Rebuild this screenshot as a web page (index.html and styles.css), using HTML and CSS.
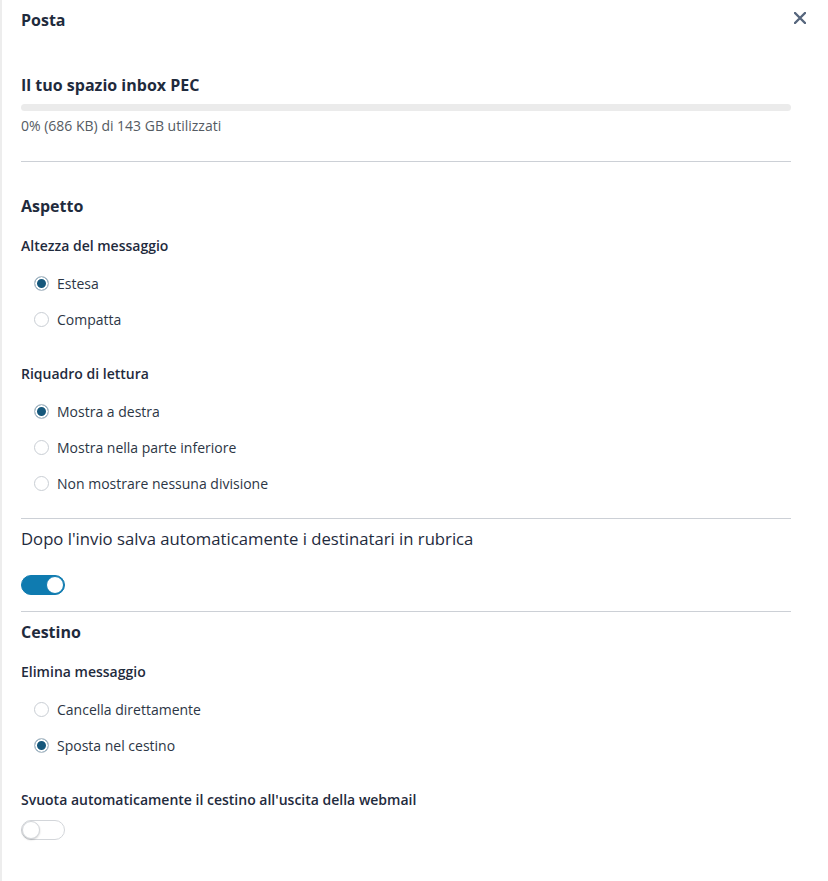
FILE: index.html
```html
<!DOCTYPE html>
<html lang="it">
<head>
  <meta charset="UTF-8">
  <meta name="viewport" content="width=device-width, initial-scale=1.0">
  <title>Posta - Impostazioni</title>
  <link rel="stylesheet" href="styles.css">
</head>
<body>
  <div class="panel">
    <div class="panel-header">
      <h1>Posta</h1>
      <button class="close-btn" aria-label="Chiudi">
        <svg width="12" height="12" viewBox="0 0 12 12"><path d="M1 1L11 11M11 1L1 11" stroke="#56667d" stroke-width="2.4" stroke-linecap="round"/></svg>
      </button>
    </div>

    <div class="panel-body">
      <!-- Spazio -->
      <h2 class="section-title first">Il tuo spazio inbox PEC</h2>
      <div class="usage-bar"><div class="usage-fill" style="width: 0%"></div></div>
      <p class="usage-text">0% (686 KB) di 143 GB utilizzati</p>

      <hr class="divider space-top">

      <!-- Aspetto -->
      <h2 class="section-title">Aspetto</h2>
      <div class="field-label">Altezza del messaggio</div>
      <div class="radio-group">
        <label class="radio-row"><span class="radio checked"></span>Estesa</label>
        <label class="radio-row"><span class="radio"></span>Compatta</label>
      </div>

      <div class="field-label spaced">Riquadro di lettura</div>
      <div class="radio-group">
        <label class="radio-row"><span class="radio checked"></span>Mostra a destra</label>
        <label class="radio-row"><span class="radio"></span>Mostra nella parte inferiore</label>
        <label class="radio-row"><span class="radio"></span>Non mostrare nessuna divisione</label>
      </div>

      <hr class="divider">

      <div class="option-title">Dopo l'invio salva automaticamente i destinatari in rubrica</div>
      <div class="toggle on"><span class="knob"></span></div>

      <hr class="divider tight">

      <!-- Cestino -->
      <h2 class="section-title compact">Cestino</h2>
      <div class="field-label">Elimina messaggio</div>
      <div class="radio-group">
        <label class="radio-row"><span class="radio"></span>Cancella direttamente</label>
        <label class="radio-row"><span class="radio checked"></span>Sposta nel cestino</label>
      </div>

      <div class="field-label spaced">Svuota automaticamente il cestino all'uscita della webmail</div>
      <div class="toggle small-gap"><span class="knob"></span></div>
    </div>
  </div>
</body>
</html>
```

FILE: styles.css
```css
body {
  margin: 0;
  font-family: "Open Sans", Arial, sans-serif;
  color: #1f2b3d;
  background-color: #fff;
}

.panel {
  min-height: 881px;
  border-left: 2px solid #ededed;
  box-sizing: border-box;
}

.panel-header {
  display: flex;
  align-items: center;
  justify-content: space-between;
  height: 40px;
  padding: 0 16px 0 19px;
}

h1 {
  margin: 0;
  font-size: 16px;
  font-weight: 700;
  line-height: 24px;
}

.close-btn {
  display: flex;
  align-items: center;
  justify-content: center;
  width: 24px;
  height: 24px;
  padding: 0;
  margin-top: -4px;
  border: none;
  background: none;
  cursor: pointer;
}

.panel-body {
  padding: 0 37px 0 19px;
}

.section-title {
  margin: 32px 0 0;
  font-size: 16px;
  font-weight: 700;
  line-height: 24px;
}

.section-title.first {
  margin-top: 33px;
}

.section-title.compact {
  margin-top: 8px;
}

/* Usage bar */
.usage-bar {
  height: 7px;
  margin-top: 7px;
  border-radius: 4px;
  background-color: #ebebeb;
  overflow: hidden;
}

.usage-fill {
  height: 100%;
  background-color: #0f7bb0;
}

.usage-text {
  margin: 6px 0 0;
  font-size: 14px;
  line-height: 18px;
  color: #555b63;
}

.divider {
  margin: 17px 0 0;
  border: none;
  border-top: 1px solid #ccd0d6;
}

.divider.space-top {
  margin-top: 26px;
}

.divider.tight {
  margin-top: 16px;
}

.field-label {
  margin-top: 18px;
  font-size: 14px;
  font-weight: 600;
  line-height: 20px;
  color: #1f2b3d;
}

.field-label.spaced {
  margin-top: 27px;
}

/* Radios */
.radio-group {
  display: flex;
  flex-direction: column;
  margin-top: 9px;
  padding-left: 13px;
}

.radio-row {
  display: flex;
  align-items: center;
  gap: 8px;
  height: 36px;
  font-size: 14px;
  color: #2c3645;
  cursor: pointer;
}

.radio {
  width: 15px;
  height: 15px;
  box-sizing: border-box;
  border: 1px solid #c9ced4;
  border-radius: 50%;
  background-color: #fff;
}

.radio.checked {
  background-color: #16587c;
  box-shadow: inset 0 0 0 2px #fff;
  border-color: #c3cad2;
}

.option-title {
  margin-top: 8px;
  font-size: 16.7px;
  line-height: 24px;
  color: #1f2b3d;
}

/* Toggle */
.toggle {
  position: relative;
  width: 44px;
  height: 20px;
  margin-top: 24px;
  box-sizing: border-box;
  border: 1px solid #d3d6da;
  border-radius: 10px;
  background-color: #fff;
}

.toggle.small-gap {
  margin-top: 10px;
}

.toggle .knob {
  position: absolute;
  top: 0;
  left: 0;
  width: 18px;
  height: 18px;
  box-sizing: border-box;
  border-radius: 50%;
  background: #fff;
  border: 1px solid #d3d6da;
  box-shadow: 0 1px 2px rgba(0, 0, 0, 0.18);
}

.toggle.on {
  border-color: #0f7bb0;
  background-color: #0f7bb0;
}

.toggle.on .knob {
  left: auto;
  right: 0;
  border-color: #0f7bb0;
  box-shadow: none;
}
```
